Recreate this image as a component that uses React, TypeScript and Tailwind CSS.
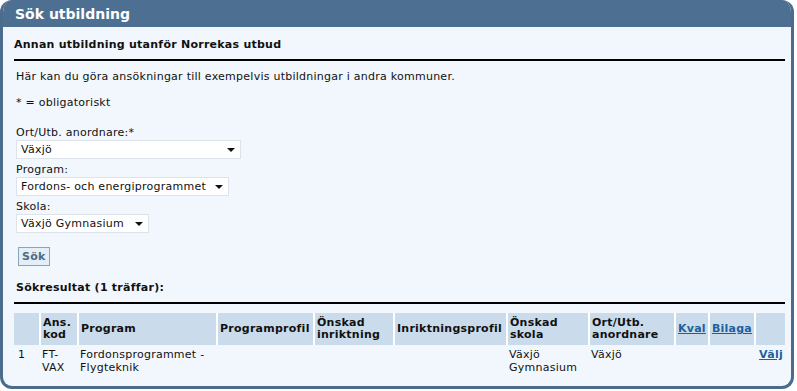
const Select = ({ value, width }: { value: string; width: string }) => (
  <div className={`flex items-center justify-between h-[19px] ${width} bg-white border border-[#dde3ea] pl-[4px] pr-[5px]`}>
    <span>{value}</span>
    <span className="w-0 h-0 border-l-[4px] border-r-[4px] border-t-[4px] border-l-transparent border-r-transparent border-t-[#111]" />
  </div>
);

const headers = [
  { label: "", w: "w-[26px]" },
  { label: "Ans. kod", w: "w-[38px]" },
  { label: "Program", w: "w-[139px]" },
  { label: "Programprofil", w: "w-[97px]" },
  { label: "Önskad inriktning", w: "w-[80px]" },
  { label: "Inriktningsprofil", w: "w-[113px]" },
  { label: "Önskad skola", w: "w-[82px]" },
  { label: "Ort/Utb. anordnare", w: "w-[86px]" },
];

export default function App() {
  return (
    <div className="w-[797px] h-[391px] bg-white font-['DejaVu_Sans',Verdana,sans-serif] text-[11px] leading-[14px] tracking-[0.25px] text-[#111]">
      <div className="w-[794px] h-[389px] rounded-[12px] border-[3px] border-t-0 border-[#4b6c8d] bg-[#f1f7fc] overflow-hidden flex flex-col">
        <div className="h-[27px] shrink-0 bg-[#4d6f91] -mx-[3px] px-[15px] flex items-center text-white font-bold text-[14px] tracking-normal">
          Sök utbildning
        </div>
        <div className="px-[11px] pr-[6px] flex flex-col items-start">
          <div className="self-stretch pt-[11px] pb-[7px] font-bold border-b-2 border-black">
            Annan utbildning utanför Norrekas utbud
          </div>
          <p className="mt-[9px] pl-[2px]">Här kan du göra ansökningar till exempelvis utbildningar i andra kommuner.</p>
          <p className="mt-[12px] pl-[2px]">* = obligatoriskt</p>
          <div className="mt-[16px] pl-[2px] flex flex-col">
            <span>Ort/Utb. anordnare:*</span>
            <Select value="Växjö" width="w-[225px]" />
            <span className="mt-[4px]">Program:</span>
            <Select value="Fordons- och energiprogrammet" width="w-[213px]" />
            <span className="mt-[4px]">Skola:</span>
            <Select value="Växjö Gymnasium" width="w-[133px]" />
          </div>
          <button className="mt-[14px] ml-[4px] h-[19px] px-[3px] bg-[#e4eef7] border border-[#8aa3bd] text-[#4d6a88] font-bold leading-none">
            Sök
          </button>
          <div className="self-stretch mt-[15px] pb-[7px] pl-[2px] font-bold border-b-2 border-black">Sökresultat (1 träffar):</div>
          <table className="mt-[9px] w-full border-collapse">
            <thead>
              <tr className="bg-[#cadcec] h-[32px]">
                {headers.map((h, i) => (
                  <th key={i} className={`${h.w} border-r-2 border-white text-left align-middle px-[2px] font-bold leading-[12px]`}>
                    {h.label}
                  </th>
                ))}
                <th className="w-[33px] border-r-2 border-white text-left px-[2px]">
                  <a className="text-[#1e5f9c] underline">Kval</a>
                </th>
                <th className="w-[45px] border-r-2 border-white text-left px-[2px]">
                  <a className="text-[#1e5f9c] underline">Bilaga</a>
                </th>
                <th />
              </tr>
            </thead>
            <tbody>
              <tr className="align-top leading-[13px]">
                <td className="pl-[4px] pt-[3px]">1</td>
                <td className="px-[2px] pt-[3px]">FT-<br />VAX</td>
                <td className="px-[2px] pt-[3px]">Fordonsprogrammet -<br />Flygteknik</td>
                <td />
                <td />
                <td />
                <td className="px-[2px] pt-[3px]">Växjö<br />Gymnasium</td>
                <td className="px-[2px] pt-[3px]">Växjö</td>
                <td />
                <td />
                <td className="px-[2px] pt-[3px] text-right">
                  <a className="text-[#1e5f9c] underline font-bold">Välj</a>
                </td>
              </tr>
            </tbody>
          </table>
        </div>
      </div>
    </div>
  );
}
